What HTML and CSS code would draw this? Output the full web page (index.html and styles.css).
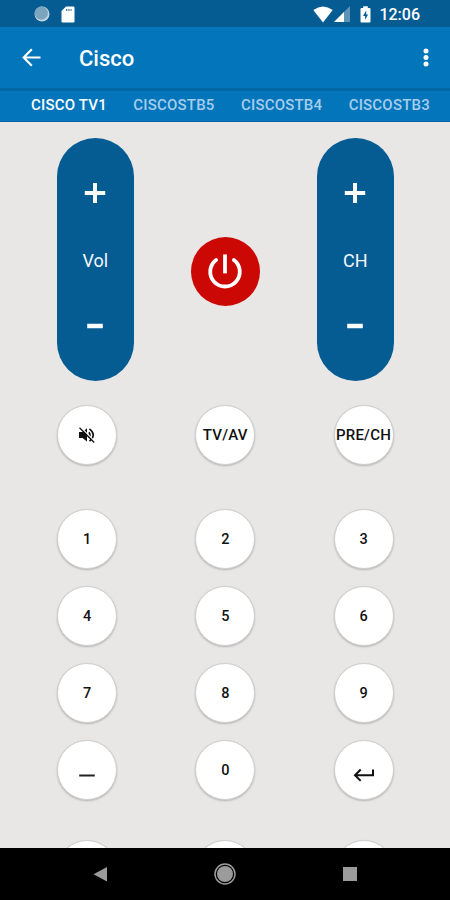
FILE: index.html
```html
<!DOCTYPE html>
<html lang="en">
<head>
    <meta charset="UTF-8">
    <meta name="viewport" content="width=device-width, initial-scale=1.0">
    <title>Cisco Remote</title>
    <link rel="stylesheet" href="styles.css">
</head>
<body>
    <div class="status-bar">
        <div class="status-left">
            <svg width="16" height="16" viewBox="0 0 16 16">
                <circle cx="8" cy="8" r="7.5" fill="#c3d6df"/>
                <circle cx="7.3" cy="7.2" r="6.6" fill="#7ba5be"/>
            </svg>
            <svg width="14" height="17" viewBox="0 0 14 17">
                <path d="M5 0.5h7.2a1.3 1.3 0 0 1 1.3 1.3v13.4a1.3 1.3 0 0 1-1.3 1.3H1.8a1.3 1.3 0 0 1-1.3-1.3V5z" fill="#fff"/>
                <path d="M5 3h1.3v2H5zM7.3 3h1.3v2H7.3zM9.6 3h1v2h-1z" fill="#477fa4"/>
            </svg>
        </div>
        <div class="status-right">
            <svg class="wifi" width="20" height="17" viewBox="0 0 20 17">
                <path d="M0.3 4Q10-3.2 19.7 4L10 16.5z" fill="#fff"/>
            </svg>
            <svg class="signal" width="16" height="16" viewBox="0 0 16 16">
                <path d="M16 0v16H0z" fill="#5e93b5"/>
                <path d="M10 6v10H0z" fill="#fff"/>
            </svg>
            <svg class="battery" width="11" height="17" viewBox="0 0 11 17">
                <path d="M3.2 0.3h4.6v1.7h1.7a1 1 0 0 1 1 1v12.5a1 1 0 0 1-1 1h-8a1 1 0 0 1-1-1V3a1 1 0 0 1 1-1h1.7z" fill="#fff"/>
                <path d="M6.2 4.5L3 10h2.1v3.8l3-5.4H6.2z" fill="#045c93"/>
            </svg>
            <span class="clock">12:06</span>
        </div>
    </div>

    <div class="app-bar">
        <svg width="20" height="20" viewBox="0 0 20 20" fill="none" stroke="#fff" stroke-width="2.2">
            <path d="M18.5 9.5H2.5M9.8 1.3L1.7 9.5l8.1 8.2"/>
        </svg>
        <h1>Cisco</h1>
        <svg class="more" width="6" height="20" viewBox="0 0 6 20" fill="#fff">
            <circle cx="3" cy="3" r="2.5"/>
            <circle cx="3" cy="9.5" r="2.5"/>
            <circle cx="3" cy="16" r="2.5"/>
        </svg>
    </div>

    <div class="tabs">
        <span class="tab active">CISCO TV1</span>
        <span class="tab">CISCOSTB5</span>
        <span class="tab">CISCOSTB4</span>
        <span class="tab">CISCOSTB3</span>
    </div>

    <div class="remote">
        <div class="controls">
            <div class="rocker">
                <svg width="22" height="22" viewBox="0 0 22 22" stroke="#fff" stroke-width="4">
                    <path d="M0.8 11h20.4M11 1v20"/>
                </svg>
                <span>Vol</span>
                <svg width="22" height="22" viewBox="0 0 22 22" stroke="#fff" stroke-width="4.5">
                    <path d="M3.2 11h15.6"/>
                </svg>
            </div>
            <div class="power">
                <svg width="36" height="36" viewBox="0 0 38 38" fill="none" stroke="#fff" stroke-width="4">
                    <path d="M19 1.5v20"/>
                    <path d="M9.6 7.3A15.6 15.6 0 1 0 28.4 7.3" stroke-linecap="round"/>
                </svg>
            </div>
            <div class="rocker">
                <svg width="22" height="22" viewBox="0 0 22 22" stroke="#fff" stroke-width="4">
                    <path d="M0.8 11h20.4M11 1v20"/>
                </svg>
                <span>CH</span>
                <svg width="22" height="22" viewBox="0 0 22 22" stroke="#fff" stroke-width="4.5">
                    <path d="M3.2 11h15.6"/>
                </svg>
            </div>
        </div>

        <div class="keys modes">
            <div class="key">
                <svg width="18" height="16" viewBox="0 0 18 16">
                    <path d="M1 5h3.5L9 1.2v13.3L4.5 11H1z" fill="#111"/>
                    <path d="M11 5.2q2 2.8 0 5.5M11.5 1.8q7.5 6 0 12.4" fill="none" stroke="#111" stroke-width="1.6"/>
                    <path d="M2.7 0.3L17 14.6" stroke="#fff" stroke-width="1.3"/>
                    <path d="M1.5 0.8L16.2 15.5" stroke="#111" stroke-width="1.3"/>
                </svg>
            </div>
            <div class="key">TV/AV</div>
            <div class="key">PRE/CH</div>
        </div>

        <div class="keys numbers">
            <div class="key">1</div>
            <div class="key">2</div>
            <div class="key">3</div>
            <div class="key">4</div>
            <div class="key">5</div>
            <div class="key">6</div>
            <div class="key">7</div>
            <div class="key">8</div>
            <div class="key">9</div>
            <div class="key">
                <svg width="22" height="22" viewBox="0 0 22 22" stroke="#222" stroke-width="2">
                    <path d="M3.2 15.5h15.6"/>
                </svg>
            </div>
            <div class="key">0</div>
            <div class="key">
                <svg width="22" height="22" viewBox="0 0 22 22" fill="none" stroke="#111" stroke-width="2">
                    <path d="M20 9.5v5.7H2.5M7.7 9.5L2 15.2l5.7 5.7"/>
                </svg>
            </div>
        </div>

        <div class="keys arrows">
            <div class="key"></div>
            <div class="key"></div>
            <div class="key"></div>
        </div>
    </div>

    <div class="nav-bar">
        <svg width="22" height="22" viewBox="0 0 22 22">
            <path d="M18 4v14.5L4.5 11.2z" fill="#9b9b9b"/>
        </svg>
        <svg width="22" height="22" viewBox="0 0 22 22">
            <circle cx="11" cy="11" r="10" fill="none" stroke="#9b9b9b" stroke-width="1.5"/>
            <circle cx="11" cy="11" r="8" fill="#9b9b9b"/>
        </svg>
        <svg width="22" height="22" viewBox="0 0 22 22">
            <rect x="4" y="4" width="14" height="14" fill="#9b9b9b"/>
        </svg>
    </div>
</body>
</html>
```
FILE: styles.css
```css
* {
    box-sizing: border-box;
}

body {
    font-family: Roboto, sans-serif;
    background-color: #e8e7e6;
    margin: 0;
    height: 900px;
    display: flex;
    flex-direction: column;
    overflow: hidden;
}

svg {
    display: block;
    flex-shrink: 0;
}

.status-bar {
    height: 27px;
    flex-shrink: 0;
    background-color: #045c93;
    display: flex;
    justify-content: space-between;
    align-items: center;
    padding: 1px 30px 0 34px;
}

.status-left,
.status-right {
    display: flex;
    align-items: center;
}

.status-left {
    gap: 11px;
}

.wifi {
    margin-right: 1px;
}

.battery {
    margin-left: 10px;
}

.clock {
    margin-left: 8px;
    font-size: 16px;
    font-weight: 500;
    color: #ffffff;
}

.app-bar {
    height: 61px;
    flex-shrink: 0;
    background-color: #0275bb;
    display: flex;
    align-items: center;
    padding: 0 21px 0 22px;
}

.app-bar h1 {
    margin: 2px 0 0 37px;
    font-size: 22px;
    font-weight: 500;
    color: #ffffff;
}

.more {
    margin-left: auto;
}

.tabs {
    height: 34px;
    flex-shrink: 0;
    background-color: #0275bb;
    border-top: 3px solid #0367a6;
    border-bottom: 1px solid #0562a0;
    display: flex;
    align-items: center;
    gap: 26.4px;
    padding: 0 0 2px 31px;
    white-space: nowrap;
}

.tab {
    font-size: 15px;
    font-weight: 500;
    letter-spacing: 0.2px;
    color: #a6cdec;
}

.tab.active {
    color: #ffffff;
}

.remote {
    flex: 1;
    min-height: 0;
    overflow: hidden;
    padding: 16px 56.5px 0 57px;
}

.controls {
    display: flex;
    justify-content: space-between;
    align-items: center;
    height: 243px;
}

.rocker {
    width: 76.5px;
    height: 243px;
    border-radius: 38.5px;
    background-color: #045c93;
    display: flex;
    flex-direction: column;
    justify-content: space-between;
    align-items: center;
    padding: 44px 0;
    color: #f3f7fa;
    font-size: 18px;
}

.rocker span {
    margin-top: 1px;
}

.power {
    width: 69px;
    height: 69px;
    margin-top: 23px;
    border-radius: 50%;
    background-color: #cb0803;
    display: flex;
    justify-content: center;
    align-items: center;
}

.keys {
    display: grid;
    grid-template-columns: repeat(3, 60px);
    grid-auto-rows: 60px;
    justify-content: space-between;
    row-gap: 17px;
}

.modes {
    margin-top: 24px;
}

.numbers {
    margin-top: 44px;
}

.arrows {
    margin-top: 40px;
}

.key {
    border-radius: 50%;
    background-color: #ffffff;
    border: 1px solid #cfcfcf;
    box-shadow: 0 1px 2px rgba(0, 0, 0, 0.22);
    display: flex;
    justify-content: center;
    align-items: center;
    font-size: 15px;
    font-weight: 500;
    letter-spacing: 0.2px;
    color: #111111;
    white-space: nowrap;
}

.numbers .key {
    font-size: 14.5px;
    letter-spacing: 0;
    padding-top: 1px;
}

.nav-bar {
    height: 52px;
    flex-shrink: 0;
    background-color: #000000;
    display: flex;
    justify-content: space-between;
    align-items: center;
    padding: 0 89px;
}
```
